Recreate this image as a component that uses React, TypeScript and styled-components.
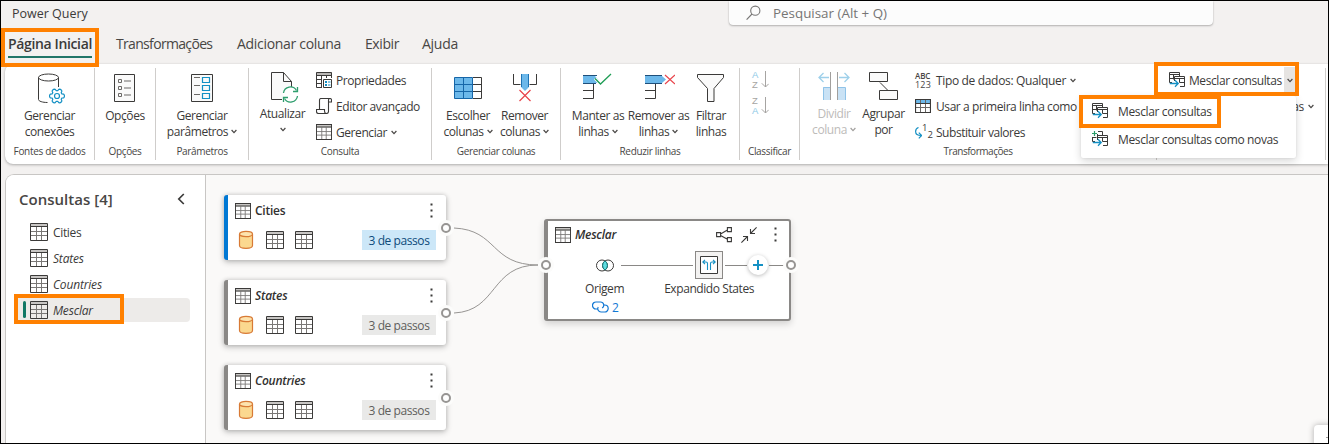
import React from 'react';
import styled, { createGlobalStyle, css } from 'styled-components';

const GlobalStyle = createGlobalStyle`
  *, *::before, *::after { box-sizing: border-box; }
  body { margin: 0; background: #f3f1f0; }
  body, button { font-family: "Open Sans", "Noto Sans", sans-serif; }
  svg { display: block; flex: none; }
`;

const INK = '#3b3a39';
const BLUE = '#1490c4';

/* ---------- Shell ---------- */

const Frame = styled.div`
  position: relative;
  width: 1329px;
  height: 444px;
  border: 1px solid #000;
  background: #f3f1f0;
  overflow: hidden;
  display: flex;
  flex-direction: column;
  font-size: 12px;
  letter-spacing: -0.42px;
  color: #3b3a39;
`;

const TitleBar = styled.header`
  height: 27px;
  flex: none;
  display: flex;
`;

const Brand = styled.div`
  width: 728px;
  padding-left: 11px;
  font-size: 12.5px;
  font-weight: 500;
  letter-spacing: 0;
  line-height: 25px;
`;

const SearchBox = styled.div`
  width: 484px;
  height: 24px;
  padding-left: 17px;
  display: flex;
  align-items: center;
  gap: 12px;
  background: #fcfcfc;
  border-radius: 0 0 4px 4px;
  box-shadow: 0 1px 2px rgba(0, 0, 0, 0.25), 0 0 1px rgba(0, 0, 0, 0.2);
  color: #767574;
  font-size: 13.4px;
  letter-spacing: 0;
`;

const TabStrip = styled.nav`
  height: 36px;
  flex: none;
  display: flex;
  gap: 24px;
  padding-left: 7px;
`;

const Tab = styled.div<{ $width: number; $spacing: number; $active?: boolean }>`
  width: ${(p) => p.$width}px;
  height: 30px;
  line-height: 32px;
  font-size: 14px;
  white-space: nowrap;
  letter-spacing: ${(p) => p.$spacing}px;
  color: #484644;
  ${(p) =>
    p.$active &&
    css`
      font-weight: 600;
      color: #3b3a39;
      border-bottom: 2px solid #217568;
    `}
`;

/* ---------- Ribbon ---------- */

const Ribbon = styled.section`
  height: 100px;
  flex: none;
  margin-left: 4px;
  padding: 4px 0;
  display: flex;
  background: #fff;
  border-radius: 8px 0 0 8px;
  box-shadow: 0 1px 3px rgba(0, 0, 0, 0.28), 0 0 1px rgba(0, 0, 0, 0.15);
`;

const GroupBox = styled.div<{ $width: number }>`
  flex: none;
  width: ${(p) => p.$width}px;
  border-right: 1px solid #cfcdcb;
  display: flex;
  flex-direction: column;
`;

const GroupBody = styled.div<{ $inset?: number }>`
  height: 76px;
  padding-left: ${(p) => p.$inset ?? 0}px;
  display: flex;
`;

const GroupCaption = styled.div<{ $spacing?: number }>`
  height: 16px;
  line-height: 15px;
  text-align: center;
  font-size: 10px;
  letter-spacing: ${(p) => p.$spacing ?? -0.33}px;
  color: #484644;
`;

const ToolBox = styled.div<{ $width: number; $raised?: boolean; $disabled?: boolean }>`
  width: ${(p) => p.$width}px;
  padding-top: 2px;
  display: flex;
  flex-direction: column;
  align-items: center;
  color: ${(p) => (p.$disabled ? '#bdbbb9' : '#3b3a39')};

  > svg {
    margin-bottom: ${(p) => (p.$raised ? -1 : 1)}px;
  }
`;

const ToolLine = styled.span`
  height: 16px;
  flex: none;
  display: flex;
  align-items: center;
  gap: 3px;
  white-space: nowrap;
`;

const RowList = styled.div<{ $offset?: number }>`
  margin-left: ${(p) => p.$offset ?? 0}px;
  margin-top: -1px;
  display: flex;
  flex-direction: column;
`;

const CommandRow = styled.div<{ $gap?: number; $spacing?: number }>`
  height: 26px;
  flex: none;
  display: flex;
  align-items: center;
  gap: ${(p) => p.$gap ?? 4}px;
  white-space: nowrap;
  letter-spacing: ${(p) => p.$spacing ?? -0.42}px;
`;

const SplitCaret = styled.span`
  width: 12px;
  height: 26px;
  margin-left: -2px;
  display: flex;
  align-items: center;
  justify-content: center;
  background: #e6e4e2;
`;

const SortList = styled.div`
  display: flex;
  flex-direction: column;
  gap: 6px;
  padding-top: 2px;
`;

const Menu = styled.div`
  position: absolute;
  left: 1080px;
  top: 95px;
  width: 215px;
  height: 62px;
  padding: 1px 0 0 11px;
  background: #fff;
  border-radius: 2px;
  box-shadow: 0 3px 8px rgba(0, 0, 0, 0.16), 0 0 2px rgba(0, 0, 0, 0.1);
`;

const MenuItem = styled.div`
  height: 28px;
  display: flex;
  align-items: center;
  gap: 10px;
  white-space: nowrap;
  letter-spacing: -0.36px;
`;

const Callout = styled.div<{ $x: number; $y: number; $w: number; $h: number }>`
  position: absolute;
  left: ${(p) => p.$x}px;
  top: ${(p) => p.$y}px;
  width: ${(p) => p.$w}px;
  height: ${(p) => p.$h}px;
  border: 4px solid #ff8000;
  pointer-events: none;
`;

/* ---------- Workspace ---------- */

const Workspace = styled.main`
  flex: 1;
  margin: 10px 0 0 4px;
  display: flex;
  border: 1px solid #c8c6c4;
  border-width: 1px 0 0 1px;
  border-radius: 9px 0 0 0;
  background: #faf9f8;
  overflow: hidden;
`;

const QueryPane = styled.aside`
  width: 200px;
  flex: none;
  background: #fff;
  border-right: 1px solid #c8c6c4;
`;

const PaneHeader = styled.div`
  height: 45px;
  padding: 2px 20px 0 13px;
  display: flex;
  align-items: center;
  justify-content: space-between;
  font-size: 15px;
  font-weight: 600;
  letter-spacing: 0.02px;
  color: #484644;
`;

const QueryRow = styled.div<{ $italic?: boolean; $selected?: boolean }>`
  position: relative;
  height: 24px;
  margin: 0 15px 2px 9px;
  padding-left: 15px;
  display: flex;
  align-items: center;
  gap: 5px;
  border-radius: 4px;
  font-style: ${(p) => (p.$italic ? 'italic' : 'normal')};
  letter-spacing: ${(p) => (p.$italic ? -0.18 : -0.35)}px;
  ${(p) =>
    p.$selected &&
    css`
      background: #edebe9;
      &::before {
        content: '';
        position: absolute;
        left: 8px;
        top: 3px;
        width: 3px;
        height: 17px;
        border-radius: 2px;
        background: #117865;
      }
    `}
`;

const Canvas = styled.div`
  position: relative;
  flex: 1;
`;

const Wires = styled.svg`
  position: absolute;
  inset: 0;
`;

const Card = styled.article<{ $y: number; $accent: string }>`
  position: absolute;
  left: 18px;
  top: ${(p) => p.$y}px;
  width: 222px;
  height: 65px;
  padding: 7px 9px 0 7px;
  border-left: 4px solid ${(p) => p.$accent};
  border-radius: 3px;
  background: #fff;
  box-shadow: 0 2px 6px rgba(0, 0, 0, 0.24), 0 0 4px rgba(0, 0, 0, 0.14);
`;

const CardHead = styled.div<{ $italic?: boolean }>`
  height: 17px;
  display: flex;
  align-items: center;
  gap: 4px;
  font-size: 12px;
  font-weight: 600;
  letter-spacing: -0.25px;
  color: #323130;
  font-style: ${(p) => (p.$italic ? 'italic' : 'normal')};
`;

const HeadActions = styled.div`
  margin-left: auto;
  margin-right: 4px;
  display: flex;
  align-items: center;
  gap: 10px;
`;

const MergeActions = styled(HeadActions)`
  gap: 9px;
  margin-right: 4px;
  > :last-child { margin-left: 8px; }
`;

const CardSteps = styled.div`
  margin-top: 11px;
  height: 20px;
  padding-left: 3px;
  display: flex;
  align-items: center;
  gap: 11px;

  > svg:first-child { margin-right: 1px; }
`;

const StepBadge = styled.span<{ $active?: boolean }>`
  margin-left: auto;
  margin-right: 1px;
  width: 74px;
  height: 20px;
  line-height: 21px;
  text-align: center;
  background: ${(p) => (p.$active ? '#cce7f8' : '#e9e9e8')};
  color: ${(p) => (p.$active ? '#0c4a7a' : '#605e5c')};
`;

const Port = styled.span<{ $x: number; $y: number }>`
  position: absolute;
  left: ${(p) => p.$x - 8}px;
  top: ${(p) => p.$y - 8}px;
  width: 16px;
  height: 16px;
  border-radius: 50%;
  background: #fcfcfb;
  &::after {
    content: '';
    position: absolute;
    inset: 3px;
    border: 2px solid #979593;
    border-radius: 50%;
    background: #fff;
  }
`;

const MergeCard = styled.article`
  position: absolute;
  left: 338px;
  top: 44px;
  width: 247px;
  height: 102px;
  padding: 5px 8px 0 7px;
  border: 2px solid #8a8886;
  border-left-width: 4px;
  border-radius: 3px;
  background: #fff;
  box-shadow: 0 3px 7px rgba(0, 0, 0, 0.16);
`;

const Flow = styled.div`
  height: 28px;
  margin-top: 8px;
  padding-left: 40px;
  margin-right: -8px;
  display: flex;
  align-items: center;
`;

const FlowLine = styled.span<{ $width: number; $gap?: number }>`
  width: ${(p) => p.$width}px;
  height: 1px;
  margin-left: ${(p) => p.$gap ?? 0}px;
  background: #8a8886;
`;

const ExpandStep = styled.span`
  width: 28px;
  height: 28px;
  margin-left: 2px;
  display: grid;
  place-items: center;
  border: 1px solid #8a8886;
  background: #f3f2f1;
`;

const AddStep = styled.span`
  width: 20px;
  height: 20px;
  margin-left: 1px;
  display: grid;
  place-items: center;
  border-radius: 50%;
  background: #fff;
  box-shadow: 0 1px 4px rgba(0, 0, 0, 0.28);
`;

const FlowLabels = styled.div`
  height: 18px;
  padding-left: 30px;
  display: flex;
  align-items: center;
  gap: 40px;
  white-space: nowrap;
`;

const LinkCount = styled.div`
  height: 20px;
  padding-left: 37px;
  display: flex;
  align-items: center;
  gap: 3px;
  color: #1278d4;
`;

const CornerPanel = styled.div`
  position: absolute;
  right: -20px;
  bottom: -20px;
  width: 34px;
  height: 38px;
  padding: 9px 0 0 12px;
  border-radius: 4px;
  background: #fff;
  box-shadow: 0 0 6px rgba(0, 0, 0, 0.3);
`;

/* ---------- Small glyphs ---------- */

const Caret = ({ color = '#484644' }: { color?: string }) => (
  <svg width="6" height="5" viewBox="0 0 6 5" fill="none" stroke={color} strokeWidth="1.2">
    <path d="M.6 1 3 3.6 5.4 1" />
  </svg>
);

const MoreDots = () => (
  <svg width="3" height="15" viewBox="0 0 3 15" fill="#3b3a39">
    <path d="M.5.5h2v2h-2zM.5 6.5h2v2h-2zM.5 12.5h2v2h-2z" />
  </svg>
);

const TableIcon = ({ size = 18, header = '#c8c6c4' }: { size?: number; header?: string }) => (
  <svg width={size} height={size} viewBox="0 0 18 18" fill="none">
    <path d="M1 1h16v3H1z" fill={header} />
    <path d="M6.5 4v13M11.5 4v13M1 8.5h16M1 12.5h16" stroke="#7a7876" />
    <path d="M.5.5h17v17H.5zM.5 3.5h17" stroke={INK} strokeWidth={size < 18 ? 1.15 : 1} />
  </svg>
);

const DatabaseIcon = () => (
  <svg width="16" height="20" viewBox="0 0 16 20" fill="#fbd88f" stroke="#d87a35" strokeWidth="1.2">
    <path d="M1.5 4v11.500c0 1.600 2.900 2.800 6.500 2.800s6.500-1.200 6.500-2.800V4" />
    <ellipse cx="8" cy="4" rx="6.500" ry="2.700" fill="#fde3ae" />
  </svg>
);

const MergeIcon = ({ plus }: { plus?: boolean }) => (
  <svg width="16" height="16" viewBox="0 0 16 16" fill="none" stroke={INK}>
    {plus ? (
      <path d="M6 .5h4.500v4M.5 6v4.500H3M.5 6.500h4M5.500 3v2" />
    ) : (
      <path d="M3 10.500H.5V.5h10v4M.5 2.500h10M.5 6.500h4M4.500 2.500v5" />
    )}
    <path d="M5.500 9V4.500h10v10H11M5.500 6.500h10M10.500 6.500v4M10.500 10.500h5" />
    <path d="M.8 11.500h8M6 8.300l3.200 3.200L6 14.700" stroke={BLUE} strokeWidth="1.300" />
    {plus && <path d="M2.500 0v5M0 2.500h5" stroke="#2a9d6a" strokeWidth="1.200" />}
  </svg>
);

const SearchIcon = () => (
  <svg width="15" height="16" viewBox="0 0 15 16" fill="none" stroke="#767574" strokeWidth="1.100">
    <circle cx="9.300" cy="5.700" r="4.600" />
    <path d="M6 9 .6 14.600" />
  </svg>
);

/* ---------- Large ribbon icons ---------- */

const Large = styled.svg.attrs({ width: 32, height: 36, viewBox: '0 0 32 36', fill: 'none' })`
  stroke: ${INK};
`;

const gear = Array.from({ length: 48 }, (_, i) => {
  const a = (i / 48) * Math.PI * 2;
  const r = [7.4, 7.4, 6.9, 5.3, 5.3, 5.3, 6.9, 7.4][i % 8];
  return `${(23 + r * Math.cos(a)).toFixed(2)},${(26 + r * Math.sin(a)).toFixed(2)}`;
}).join(' ');

const ConnectionsIcon = () => (
  <Large>
    <path d="M4.500 7.500v22c0 1.700 4 3 9 3" />
    <path d="M24.500 7.500V17" />
    <ellipse cx="14.500" cy="7.500" rx="10" ry="3.500" />
    <polygon points={gear} stroke={BLUE} strokeWidth="1.200" fill="#fff" strokeLinejoin="round" />
    <circle cx="23" cy="26" r="2.500" stroke={BLUE} strokeWidth="1.200" />
  </Large>
);

const OptionsIcon = () => (
  <Large>
    <path d="M5.500 4.500h20v27h-20z" fill="#fafafa" />
    <path d="M9.500 9.500h3v3h-3zM9.500 16.500h3v3h-3zM9.500 23.500h3v3h-3zM15 11h7M15 18h7M15 25h7" stroke="#6b6967" />
  </Large>
);

const ParametersIcon = () => (
  <Large>
    <path d="M5.500 4.500h21v27h-21z" fill="#fafafa" />
    <path d="M8 7.500h6M8 15.500h6M8 24.500h6" stroke="#6b6967" />
    <path d="M16.500 7.500h7v5h-7zM16.500 15.500h7v5h-7zM16.500 23.500h7v5h-7z" stroke={BLUE} strokeWidth="1.200" />
  </Large>
);

const RefreshIcon = () => (
  <Large>
    <path d="M15 29.500H4.500v-27h12l8 9V17" fill="#fafafa" />
    <path d="M16.500 2.500v9h8" />
    <circle cx="23.500" cy="24.500" r="7.500" fill="#fff" stroke="none" />
    <g stroke="#2f9e6e" strokeWidth="1.300">
      <path d="M16.500 23a7 7 0 0 1 13-2.500M30.500 26a7 7 0 0 1-13 2.500" />
      <path d="M30.500 17v4.500H26M16.500 32v-4.500H21" />
    </g>
  </Large>
);

const ChooseColumnsIcon = () => (
  <Large>
    <path d="M2.500 7.500h18v21h-18z" fill="#6cb8ea" stroke="none" />
    <path d="M21 7.500h8.500v21H21M21 14.500h8.500M21 21.500h8.500" />
    <path d="M2.500 7.500h18v21h-18zM2.500 14.500h18M2.500 21.500h18M11.500 7.500v21" stroke="#1666a8" />
  </Large>
);

const RemoveColumnsIcon = () => (
  <Large>
    <path d="M4.500 4v10.500h7M27.500 4v10.500h-7" />
    <path d="M12 4h8v13l-4 4-4-4z" fill="#6cb8ea" stroke="none" />
    <path d="M12.500 4v13M19.500 4v13" stroke="#1f74b5" />
    <path d="m10.500 20 11 11m0-11-11 11" stroke="#e8434a" strokeWidth="1.200" />
  </Large>
);

const KeepRowsIcon = () => (
  <Large>
    <path d="M11.500 14v14.500M1 20.500h10.500M1 28.500h10.500" />
    <path d="M1 6h12l3.500 4-1.500 3H1z" fill="#6cb8ea" stroke="none" />
    <path d="M1 5.500h14M1 13.500h13" stroke="#1f4f7a" />
    <path d="m13 8.500 5.500 5.500L29 4" stroke="#fff" strokeWidth="3" />
    <path d="m13 8.500 5.500 5.500L29 4" stroke="#1f9d55" strokeWidth="1.300" />
  </Large>
);

const RemoveRowsIcon = () => (
  <Large>
    <path d="M12.500 14v14.500M2 20.500h10.500M2 28.500h10.500" />
    <path d="M2 6h17l4 3.500-4 3.500H2z" fill="#6cb8ea" stroke="none" />
    <path d="M2 5.500h17M2 13.500h17" stroke="#1f4f7a" />
    <path d="m22 5 10 9m0-9-10 9" stroke="#e8434a" strokeWidth="1.200" />
  </Large>
);

const FilterIcon = () => (
  <Large>
    <path d="M2.500 4.500h26v3l-9.500 11v13h-6.500v-13l-10-11z" fill="#fafafa" />
  </Large>
);

const SplitColumnIcon = () => (
  <Large>
    <path d="M5 17h7v13H5zM20 17h7v13h-7z" fill="#c9e2f5" stroke="none" />
    <path d="M5.500 30V17.500H12M27.500 30V17.500H20" stroke="#8fc3e8" />
    <path d="M12.500 2v28M19.500 2v28" stroke="#a19f9d" />
    <path d="M11 7.500H1M5.500 3 1 7.500 5.500 12M21 7.500h10M26.500 3 31 7.500 26.500 12" stroke="#9ed0ea" strokeWidth="1.300" />
  </Large>
);

const GroupByIcon = () => (
  <Large>
    <path d="M12 12.500 20 20.500" />
    <path d="M1.500 2.500h18v9h-18zM11.500 20.500h18v9h-18z" fill="#fafafa" />
  </Large>
);

/* ---------- Row icons ---------- */

const PropertiesIcon = () => (
  <svg width="16" height="16" viewBox="0 0 16 16" fill="none" stroke={INK}>
    <path d="M0 .5h16v3H0z" fill="#b9b7b5" stroke="none" />
    <path d="M6 15.500H.5V.5h15V6M.5 3.500h15M5.500 4v11M.5 7.500H6M.5 11.500H6M10.500 4v2" />
    <path d="M7.500 7.500h8v8h-8z" fill="#fff" />
    <path d="M9 9h2v2H9zM9 12h2v2H9z" fill={BLUE} stroke="none" />
    <path d="M12 10h2.500M12 13h2.500" stroke={BLUE} />
  </svg>
);

const ScriptIcon = () => (
  <svg width="16" height="16" viewBox="0 0 16 16" fill="none" stroke={INK} strokeWidth="1.100">
    <path d="M3.500 11V2c0-1 .6-1.500 1.500-1.500h9c1 0 1.500.6 1.500 1.500v2h-3" />
    <path d="M14 .5c-1 0-1.500.6-1.500 1.500v11.500c0 1.200-.8 2-2 2H2.500c-1.200 0-2-.8-2-2V11.500h8V13c0 1.500.6 2.500 2 2.500" />
  </svg>
);

const FirstRowIcon = () => (
  <svg width="16" height="14" viewBox="0 0 16 14" fill="none" stroke={INK}>
    <path d="M1 1h14v3.500H1z" fill="#6cb8ea" stroke="none" />
    <path d="M5.500 1v12M10.500 1v12M1 8.500h14" stroke="#6b6967" />
    <path d="M.5.5h15v13H.5zM.5 4.500h15" strokeWidth="1.200" />
  </svg>
);

const TypeGlyph = styled.span`
  width: 17px;
  display: flex;
  flex-direction: column;
  font-size: 8px;
  line-height: 9px;
  font-weight: 600;
  letter-spacing: -0.1px;
  color: #484644;
`;

const TypeDigits = styled.span`
  font-size: 9px;
  font-weight: 400;
  letter-spacing: 0.2px;
`;

const ReplaceGlyph = styled.span`
  width: 17px;
  height: 18px;
  display: flex;
  font-size: 9.5px;
  line-height: 10px;
  letter-spacing: 0;

  > svg { margin-top: 4px; }
  > span:last-child { padding-top: 7px; }
`;

const ReplaceIcon = () => (
  <ReplaceGlyph>
    <svg width="7" height="12" viewBox="0 0 7 12" fill="none" stroke={BLUE} strokeWidth="1.200">
      <path d="M3.500.5C1.200 1.200.6 3 .6 4.500c0 2.400 1.800 4 5.700 4M3.800 5.600l2.800 2.900-2.800 2.900" />
    </svg>
    <span>1</span>
    <span>2</span>
  </ReplaceGlyph>
);

const SortGlyph = styled.div`
  display: flex;
  gap: 2px;
  height: 20px;
  color: #a6a4a2;
  font-family: "Liberation Sans", Arial, sans-serif;
  font-size: 9.5px;
  line-height: 10px;
  letter-spacing: 0;
`;

const SortLetters = styled.span<{ $blue: 'first' | 'last' }>`
  width: 7px;
  display: flex;
  flex-direction: column;
  > span:${(p) => p.$blue}-child { color: #8cc8e6; }
`;

const Sort = ({ letters, blue }: { letters: [string, string]; blue: 'first' | 'last' }) => (
  <SortGlyph>
    <SortLetters $blue={blue}>
      <span>{letters[0]}</span>
      <span>{letters[1]}</span>
    </SortLetters>
    <svg width="8" height="18" viewBox="0 0 8 18" fill="none" stroke="#a6a4a2">
      <path d="M4.500 1v16M.8 13.300 4.500 17l3.200-3.200" />
    </svg>
  </SortGlyph>
);

/* ---------- Diagram icons ---------- */

const ShareIcon = () => (
  <svg width="16" height="16" viewBox="0 0 16 16" fill="none" stroke={INK} strokeWidth="1.100">
    <path d="M.6 5.600h4v4h-4zM11.400.6h4v4h-4zM11.400 10.600h4v4h-4zM4.600 7l6.800-4M4.600 8.400l6.800 3.800" />
  </svg>
);

const CollapseIcon = () => (
  <svg width="16" height="16" viewBox="0 0 16 16" fill="none" stroke={INK} strokeWidth="1.100">
    <path d="M15.600.4 9.500 6.500M9.500 2v4.500H14M.4 15.600l6.100-6.100M2 9.500h4.500V14" />
  </svg>
);

const JoinIcon = () => (
  <svg width="20" height="13" viewBox="0 0 20 13" fill="none" stroke={INK}>
    <circle cx="7" cy="6.500" r="5.500" />
    <circle cx="13" cy="6.500" r="5.500" />
    <path d="M10 1.900a5.600 5.600 0 0 1 0 9.200 5.600 5.600 0 0 1 0-9.200z" fill="#5fdce0" stroke="#14807f" />
  </svg>
);

const ExpandIcon = () => (
  <svg width="18" height="18" viewBox="0 0 18 18" fill="none">
    <path d="M.5.5h17v17H.5z" fill="#fff" stroke={INK} />
    <path d="M7.500 14V7.500c0-1-.5-1.500-1.500-1.500H3M5 3.800 2.800 6 5 8.200M10.500 14V7.500c0-1 .5-1.500 1.500-1.500h3M13 3.800 15.200 6 13 8.200" stroke={BLUE} strokeWidth="1.100" />
  </svg>
);

const LinkIcon = () => (
  <svg width="17" height="12" viewBox="0 0 17 12" fill="none" stroke="#1278d4" strokeWidth="1.200">
    <path d="M6 8H4A3.200 3.200 0 0 1 4 1h4.500a3.200 3.200 0 0 1 1.600 6" />
    <path d="M11.500 4h1.200a3.400 3.400 0 0 1 0 7H9a3.300 3.300 0 0 1-2.800-5" />
  </svg>
);

/* ---------- Compositions ---------- */

type ToolProps = {
  width: number;
  icon: React.ReactNode;
  lines: string[];
  caret?: 'inline' | 'below';
  raised?: boolean;
  disabled?: boolean;
};

const Tool = ({ width, icon, lines, caret, raised, disabled }: ToolProps) => (
  <ToolBox $width={width} $raised={raised} $disabled={disabled}>
    {icon}
    {lines.map((line, i) => (
      <ToolLine key={line}>
        {line}
        {caret === 'inline' && i === lines.length - 1 && <Caret color={disabled ? '#a19f9d' : undefined} />}
      </ToolLine>
    ))}
    {caret === 'below' && (
      <ToolLine>
        <Caret />
      </ToolLine>
    )}
  </ToolBox>
);

type GroupProps = { width: number; caption?: string; inset?: number; spacing?: number; children: React.ReactNode };

const Group = ({ width, caption, inset, spacing, children }: GroupProps) => (
  <GroupBox $width={width}>
    <GroupBody $inset={inset}>{children}</GroupBody>
    {caption && <GroupCaption $spacing={spacing}>{caption}</GroupCaption>}
  </GroupBox>
);

const queries = [
  { name: 'Cities', italic: false },
  { name: 'States', italic: true },
  { name: 'Countries', italic: true },
];

export default function App() {
  return (
    <>
      <GlobalStyle />
      <Frame>
        <TitleBar>
          <Brand>Power Query</Brand>
          <SearchBox>
            <SearchIcon />
            Pesquisar (Alt + Q)
          </SearchBox>
        </TitleBar>

        <TabStrip>
          <Tab $width={84} $spacing={-0.36} $active>Página Inicial</Tab>
          <Tab $width={97} $spacing={-0.67}>Transformações</Tab>
          <Tab $width={104} $spacing={-0.31}>Adicionar coluna</Tab>
          <Tab $width={33} $spacing={-0.41}>Exibir</Tab>
          <Tab $width={36} $spacing={-0.26}>Ajuda</Tab>
        </TabStrip>

        <Ribbon>
          <Group width={90} caption="Fontes de dados">
            <Tool width={89} icon={<ConnectionsIcon />} lines={['Gerenciar', 'conexões']} />
          </Group>
          <Group width={61} caption="Opções">
            <Tool width={60} icon={<OptionsIcon />} lines={['Opções']} />
          </Group>
          <Group width={93} caption="Parâmetros">
            <Tool width={92} icon={<ParametersIcon />} lines={['Gerenciar', 'parâmetros']} caret="inline" />
          </Group>
          <Group width={183} caption="Consulta">
            <Tool width={67} icon={<RefreshIcon />} lines={['Atualizar']} caret="below" raised />
            <RowList>
              <CommandRow>
                <PropertiesIcon />
                Propriedades
              </CommandRow>
              <CommandRow>
                <ScriptIcon />
                Editor avançado
              </CommandRow>
              <CommandRow>
                <TableIcon size={16} />
                Gerenciar
                <Caret />
              </CommandRow>
            </RowList>
          </Group>
          <Group width={129} caption="Gerenciar colunas" inset={8}>
            <Tool width={56} icon={<ChooseColumnsIcon />} lines={['Escolher', 'colunas']} caret="inline" />
            <Tool width={57} icon={<RemoveColumnsIcon />} lines={['Remover', 'colunas']} caret="inline" />
          </Group>
          <Group width={179} caption="Reduzir linhas" inset={7}>
            <Tool width={60} icon={<KeepRowsIcon />} lines={['Manter as', 'linhas']} caret="inline" />
            <Tool width={61} icon={<RemoveRowsIcon />} lines={['Remover as', 'linhas']} caret="inline" />
            <Tool width={44} icon={<FilterIcon />} lines={['Filtrar', 'linhas']} />
          </Group>
          <Group width={60} caption="Classificar" inset={12}>
            <SortList>
              <Sort letters={['A', 'Z']} blue="first" />
              <Sort letters={['Z', 'A']} blue="last" />
            </SortList>
          </Group>
          <Group width={357} caption="Transformações" inset={7} spacing={-0.47}>
            <Tool width={54} icon={<SplitColumnIcon />} lines={['Dividir', 'coluna']} caret="inline" raised disabled />
            <Tool width={45} icon={<GroupByIcon />} lines={['Agrupar', 'por']} raised />
            <RowList $offset={9}>
              <CommandRow $spacing={-0.34}>
                <TypeGlyph>
                  ABC
                  <TypeDigits>123</TypeDigits>
                </TypeGlyph>
                Tipo de dados: Qualquer
                <Caret />
              </CommandRow>
              <CommandRow $gap={5}>
                <FirstRowIcon />
                Usar a primeira linha como
              </CommandRow>
              <CommandRow $spacing={-0.46}>
                <ReplaceIcon />
                Substituir valores
              </CommandRow>
            </RowList>
          </Group>
          <Group width={169} inset={12}>
            <RowList>
              <CommandRow>
                <MergeIcon />
                Mesclar consultas
                <SplitCaret>
                  <Caret />
                </SplitCaret>
              </CommandRow>
              <CommandRow $spacing={-0.37}>
                <MergeIcon />
                Acrescentar consultas
                <Caret />
              </CommandRow>
            </RowList>
          </Group>
        </Ribbon>

        <Workspace>
          <QueryPane>
            <PaneHeader>
              Consultas [4]
              <svg width="8" height="12" viewBox="0 0 8 12" fill="none" stroke="#3b3a39" strokeWidth="1.700">
                <path d="M6.800 1 1.800 6l5 5" />
              </svg>
            </PaneHeader>
            {queries.map((q) => (
              <QueryRow key={q.name} $italic={q.italic}>
                <TableIcon />
                {q.name}
              </QueryRow>
            ))}
            <QueryRow $italic $selected>
              <TableIcon />
              Mesclar
            </QueryRow>
          </QueryPane>

          <Canvas>
            <Wires width="600" height="268" viewBox="0 0 600 268" fill="none" stroke="#979593">
              <path d="M248 53c44 2 36 37 84 37M248 138c44-2 36-48 84-48" />
            </Wires>
            {queries.map((q, i) => (
              <Card key={q.name} $y={20 + i * 85} $accent={i === 0 ? '#0078d4' : '#8a8886'}>
                <CardHead $italic={q.italic}>
                  <TableIcon size={16} />
                  {q.name}
                  <HeadActions>
                    <MoreDots />
                  </HeadActions>
                </CardHead>
                <CardSteps>
                  <DatabaseIcon />
                  <TableIcon />
                  <TableIcon />
                  <StepBadge $active={i === 0}>3 de passos</StepBadge>
                </CardSteps>
              </Card>
            ))}
            {queries.map((q, i) => (
              <Port key={q.name} $x={240} $y={53 + i * 85} />
            ))}
            <MergeCard>
              <CardHead $italic>
                <TableIcon size={16} />
                Mesclar
                <MergeActions>
                  <ShareIcon />
                  <CollapseIcon />
                  <MoreDots />
                </MergeActions>
              </CardHead>
              <Flow>
                <JoinIcon />
                <FlowLine $width={72} $gap={6} />
                <ExpandStep>
                  <ExpandIcon />
                </ExpandStep>
                <FlowLine $width={22} $gap={2} />
                <AddStep>
                  <svg width="12" height="12" viewBox="0 0 12 12" stroke="#1490c4" strokeWidth="2">
                    <path d="M6 1v10M1 6h10" />
                  </svg>
                </AddStep>
                <FlowLine $width={15} $gap={1} />
              </Flow>
              <FlowLabels>
                <span>Origem</span>
                <span>Expandido States</span>
              </FlowLabels>
              <LinkCount>
                <LinkIcon />2
              </LinkCount>
            </MergeCard>
            <Port $x={340} $y={90} />
            <Port $x={585} $y={90} />
          </Canvas>
        </Workspace>

        <Menu>
          <MenuItem>
            <MergeIcon />
            Mesclar consultas
          </MenuItem>
          <MenuItem>
            <MergeIcon plus />
            Mesclar consultas como novas
          </MenuItem>
        </Menu>

        <CornerPanel>
          <svg width="7" height="7" viewBox="0 0 7 7" stroke="#a19f9d">
            <path d="M3.500 0v7M0 3.500h7" />
          </svg>
        </CornerPanel>

        <Callout $x={0} $y={27} $w={98} $h={39} />
        <Callout $x={1153} $y={61} $w={145} $h={34} />
        <Callout $x={1078} $y={94} $w={142} $h={33} />
        <Callout $x={13} $y={293} $w={110} $h={30} />
      </Frame>
    </>
  );
}
